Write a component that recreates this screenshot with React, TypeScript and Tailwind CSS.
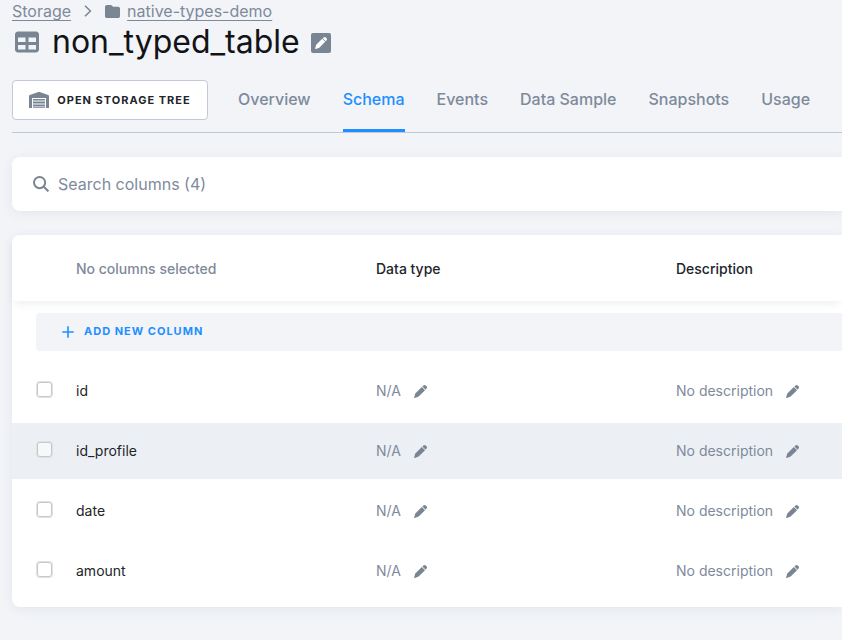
import React from "react";
import { FaFolder, FaTable } from "react-icons/fa6";

const tabs = ["Overview", "Schema", "Events", "Data Sample", "Snapshots", "Usage"];
const columns = ["id", "id_profile", "date", "amount"];

function SearchIcon() {
  return (
    <svg viewBox="0 0 16 16" className="size-4 shrink-0 text-[#7a8594]" fill="none" stroke="currentColor" strokeWidth="2" aria-hidden="true">
      <circle cx="6.6" cy="6.6" r="5.6" />
      <path d="M10.8 10.8 15.4 15.4" />
    </svg>
  );
}

function PencilIcon({ className }: { className: string }) {
  return (
    <svg viewBox="0 0 14 14" className={className} fill="currentColor" aria-hidden="true">
      <path d="M8.4 2.1 11.9 5.6 5 12.5 .9 13.9Q.1 14.1.2 13.2L1.4 9.1Z" />
      <path d="M9 1.5 10.1.5Q11.4-.5 12.6.5L13.5 1.4Q14.5 2.6 13.5 3.9L12.5 5Z" />
    </svg>
  );
}

function WarehouseIcon() {
  return (
    <svg viewBox="0 0 20 16" className="h-4 w-5 shrink-0" aria-hidden="true">
      <path fill="#7a8594" d="M0 4.2Q0 3.4.7 3.1L9.4.1Q10-.1 10.6.1L19.3 3.1Q20 3.4 20 4.2V16H17V6H3V16H0Z" />
      <path fill="#b9c1cd" d="M4 7h12v9H4Z" />
      <path fill="#7a8594" d="M4 7h12v1H4ZM4 10h12v1H4ZM4 13h12v1H4ZM4 15.4h12v.6H4Z" />
    </svg>
  );
}

function EditableCell({ text, label }: { text: string; label: string }) {
  return (
    <div className="flex items-center gap-[13px]">
      <span>{text}</span>
      <button type="button" aria-label={label} className="text-[#7a8594]">
        <PencilIcon className="size-[13px]" />
      </button>
    </div>
  );
}

export default function App() {
  return (
    <div className="min-h-screen overflow-hidden bg-[#f2f4f8] pb-8 pl-3 font-['Inter','Liberation_Sans',sans-serif] text-[#222529]">
      <header>
        <nav aria-label="Breadcrumb" className="flex h-[22px] items-center text-base text-[#7e8a9b]">
          <a href="#storage" className="underline underline-offset-3">Storage</a>
          <svg viewBox="0 0 8 12" className="mx-[13px] h-3 w-2" fill="none" stroke="#7a8594" strokeWidth="1.5" aria-hidden="true">
            <path d="M1 .8 6.4 6 1 11.2" />
          </svg>
          <FaFolder className="mr-[7px] size-[15px] text-[#7a8594]" />
          <a href="#bucket" className="underline underline-offset-3">native-types-demo</a>
        </nav>
        <div className="flex h-10 items-center">
          <FaTable className="mx-[3px] size-6 text-[#7a8594]" />
          <h1 className="ml-2.5 text-[32px] leading-10 text-[#111316]">non_typed_table</h1>
          <button type="button" aria-label="Rename table" className="ml-[11px] mt-0.5 flex size-5 items-center justify-center rounded-xs bg-[#7a8594] text-white">
            <PencilIcon className="size-3" />
          </button>
        </div>
      </header>

      <div className="mt-[18px] flex h-[53px] items-start border-b border-[#c0c9d8]">
        <button type="button" className="flex h-10 w-[196px] shrink-0 items-center justify-center gap-2 rounded-sm border border-[#c3c9d8] bg-white text-[11px] font-bold tracking-[1px]">
          <WarehouseIcon />
          OPEN STORAGE TREE
        </button>
        <nav aria-label="Table sections" className="ml-[30px] flex gap-8 text-base font-medium whitespace-nowrap text-[#7e8a9b]">
          {tabs.map((tab) => (
            <a
              key={tab}
              href={"#" + tab}
              className={tab === "Schema" ? "h-[52px] border-b-3 border-[#1f8fff] pt-[7px] text-[#1f8fff]" : "h-[52px] pt-[7px]"}
            >
              {tab}
            </a>
          ))}
        </nav>
      </div>

      <label className="mt-6 flex h-[54px] items-center gap-[9px] rounded-l-lg bg-white pl-[21px] shadow-[0_2px_12px_rgba(34,60,90,0.08)]">
        <SearchIcon />
        <input
          type="text"
          aria-label="Search columns"
          placeholder="Search columns (4)"
          className="h-full min-w-0 flex-1 bg-transparent text-base outline-none placeholder:text-[#7e8a9b]"
        />
      </label>

      <main className="mt-6 rounded-l-lg bg-white pb-1.5 shadow-[0_2px_12px_rgba(34,60,90,0.08)]">
        <table className="w-full table-fixed border-separate border-spacing-0 text-left text-sm">
          <colgroup>
            <col className="w-16" />
            <col className="w-[300px]" />
            <col className="w-[300px]" />
            <col />
          </colgroup>
          <thead className="shadow-[0_4px_8px_-2px_rgba(34,60,90,0.09)]">
            <tr className="h-[66px] *:pt-0.5">
              <td />
              <th className="font-medium text-[#7e8a9b]">No columns selected</th>
              <th className="font-medium">Data type</th>
              <th className="font-medium">Description</th>
            </tr>
          </thead>
          <tbody>
            <tr>
              <td colSpan={4} className="pt-3 pb-2.5 pl-6">
                <button type="button" className="flex h-[38px] w-full items-center gap-2.5 rounded-l-sm bg-[#f2f4f8] pl-[26px] text-[11px] font-bold tracking-[1px] text-[#1f8fff]">
                  <svg viewBox="0 0 12 12" className="size-3" stroke="currentColor" strokeWidth="1.6" aria-hidden="true">
                    <path d="M6 .3v11.4M.3 6h11.4" />
                  </svg>
                  ADD NEW COLUMN
                </button>
              </td>
            </tr>
            {columns.map((name) => (
              <tr
                key={name}
                className={
                  name === "id_profile"
                    ? "h-[60px] *:border-y-2 *:border-transparent *:bg-[#ecf0f5] *:bg-clip-padding"
                    : "h-[60px] *:border-y-2 *:border-transparent"
                }
              >
                <td className="pb-[3px] pl-[25px]">
                  <input
                    type="checkbox"
                    aria-label={"Select " + name}
                    className="block size-[15px] appearance-none rounded-[3px] border border-[#c6c8cb] bg-white/50 ring-1 ring-[#e0e1e3]"
                  />
                </td>
                <td>{name}</td>
                <td className="text-[#7e8a9b]">
                  <EditableCell text="N/A" label={"Edit data type of " + name} />
                </td>
                <td className="text-[#7e8a9b]">
                  <EditableCell text="No description" label={"Edit description of " + name} />
                </td>
              </tr>
            ))}
          </tbody>
        </table>
      </main>
    </div>
  );
}
